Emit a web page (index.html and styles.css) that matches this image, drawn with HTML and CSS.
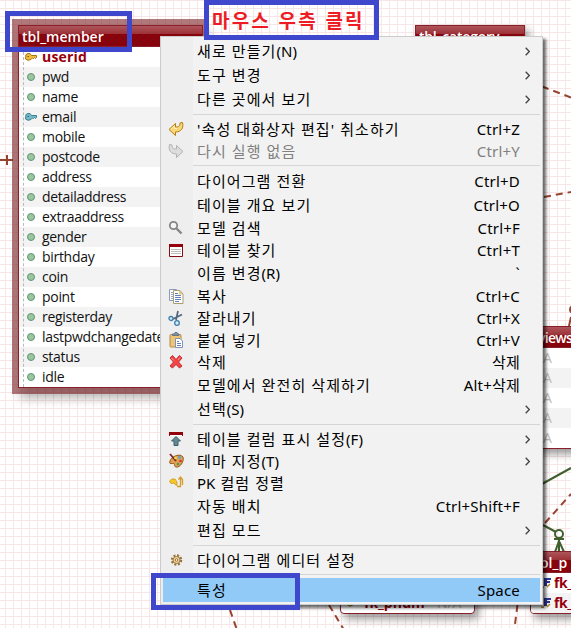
FILE: index.html
```html
<!DOCTYPE html>
<html lang="ko">
<head>
<meta charset="utf-8">
<title>tbl_member</title>
<link rel="stylesheet" href="styles.css">
</head>
<body>
<main class="canvas">
  <svg class="links" width="571" height="628" fill="none" stroke="#96442e" stroke-width="2">
    <path d="M0 160H13M7 155V165"/>
    <path stroke-dasharray="7 5" d="M542 86.5L571 97.5M544 197L571 192M545 523L571 494M230 610L237 630M329 605L344 630M517.500 605L515 624"/>
    <path d="M573 306c-4 1-4 6 0 7M571 317l-2 9"/>
    <g stroke="#40602f"><path d="M542 484L571 468M543 525L556 532M554 539H564M559 539V552M559 541L555 552M559 541L564 552"/><circle cx="559" cy="534" r="4"/></g>
  </svg>

  <section class="table member">
    <h2>tbl_member</h2>
    <ul>
      <li class="pk"><svg class="key" viewBox="0 0 12 8"><path fill="#f0bd3c" stroke="#a67516" d="M1 1.500L3 .5H5L6.500 2.500H11.500V4.500L10.500 5.500L9.500 4.500L8.500 5.500L7.500 5L6 6.500L3 7.300L.5 6Z"/><path stroke="#7a5512" d="M2.500 3.500H4"/></svg>userid</li>
      <li><i></i>pwd</li>
      <li><i></i>name</li>
      <li><svg class="key" viewBox="0 0 12 8"><path fill="#74bac7" stroke="#397f91" d="M1 1.500L3 .5H5L6.500 2.500H11.500V4.500L10.500 5.500L9.500 4.500L8.500 5.500L7.500 5L6 6.500L3 7.300L.5 6Z"/><path stroke="#245d70" d="M2.500 3.500H4"/></svg>email</li>
      <li><i></i>mobile</li>
      <li><i></i>postcode</li>
      <li><i></i>address</li>
      <li><i></i>detailaddress</li>
      <li><i></i>extraaddress</li>
      <li><i></i>gender</li>
      <li><i></i>birthday</li>
      <li><i></i>coin</li>
      <li><i></i>point</li>
      <li><i></i>registerday</li>
      <li><i></i>lastpwdchangedate</li>
      <li><i></i>status</li>
      <li><i></i>idle</li>
    </ul>
  </section>
  <section class="table category"><h2>tbl_category</h2></section>
  <section class="table reviews"><h2>views</h2><ul><li>A</li><li>A</li><li>A</li><li>A</li><li>A</li></ul></section>
  <section class="table product"><h2>ol_p</h2><ul>
    <li><svg class="fk" viewBox="0 0 10 10"><path fill="#303894" d="M3 0H10V2H6V3H9V5H6V8H3Z"/><path stroke="#b58a28" stroke-width="1.500" fill="none" d="M0 9.200H3M6 9L9 6"/></svg>fk_</li>
    <li><svg class="fk" viewBox="0 0 10 10"><path fill="#303894" d="M3 0H10V2H6V3H9V5H6V8H3Z"/><path stroke="#b58a28" stroke-width="1.500" fill="none" d="M0 9.200H3M6 9L9 6"/></svg>fk_</li></ul></section>
  <section class="table order"><ul><li><svg class="key" viewBox="0 0 12 8"><path fill="#f0bd3c" stroke="#a67516" d="M1 1.500L3 .5H5L6.500 2.500H11.500V4.500L7.500 5L3 7.300L.5 6Z"/></svg>fk_pnum<em>N/A</em></li></ul></section>

  <nav class="menu">
    <div class="item sub"><span>새로 만들기<b>(N)</b></span><svg class="chev" viewBox="0 0 5 9"><path d="M.7.7L4.300 4.500L.7 8.300"/></svg></div>
    <div class="item sub"><span>도구 변경</span><svg class="chev" viewBox="0 0 5 9"><path d="M.7.7L4.300 4.500L.7 8.300"/></svg></div>
    <div class="item sub"><span>다른 곳에서 보기</span><svg class="chev" viewBox="0 0 5 9"><path d="M.7.7L4.300 4.500L.7 8.300"/></svg></div>
    <hr>
    <div class="item short"><svg class="icon" viewBox="0 0 16 16"><path fill="#fbd675" stroke="#b37d15" d="M1 8.500L7.500 2.500V6C11 6 12 5 12 2L14.500 1.500C16 7 13 11 7.500 11V14.500Z"/><path stroke="#fff0b8" d="M3 8L6.500 5V7.500H9"/></svg><span>'속성 대화상자 편집' 취소하기</span><kbd>Ctrl+Z</kbd></div>
    <div class="item short off"><svg class="icon" viewBox="0 0 16 16"><path fill="#ddd" stroke="#b2b2b2" d="M15 8.500L8.500 2.500V6C5 6 4 5 4 2L1.500 1.500C0 7 3 11 8.500 11V14.500Z"/></svg><span>다시 실행 없음</span><kbd>Ctrl+Y</kbd></div>
    <hr>
    <div class="item"><span>다이어그램 전환</span><kbd>Ctrl+D</kbd></div>
    <div class="item"><span>테이블 개요 보기</span><kbd>Ctrl+O</kbd></div>
    <div class="item short"><svg class="icon" viewBox="0 0 16 16"><circle cx="5.500" cy="5.500" r="3.700" fill="#f5f5f5" stroke="#858585" stroke-width="1.800"/><path stroke="#858585" stroke-width="2.400" d="M8.500 8.500L13.500 13.500"/></svg><span>모델 검색</span><kbd>Ctrl+F</kbd></div>
    <div class="item short"><svg class="icon" viewBox="0 0 16 16"><path fill="#fff" stroke="#850d13" d="M1.500 2.500H14.500V14.500H1.500Z"/><path fill="#92000a" d="M1 2H15V5H1Z"/><path stroke="#bbb" d="M3 7.500H13M3 9.500H13M3 11.500H13"/></svg><span>테이블 찾기</span><kbd>Ctrl+T</kbd></div>
    <div class="item"><span>이름 변경<b>(R)</b></span><kbd>`</kbd></div>
    <div class="item short"><svg class="icon" viewBox="0 0 16 16"><path fill="#fff" stroke="#8b9ab8" d="M1.500 1.500H8.500V12.500H1.500Z"/><path stroke="#8ea9d5" d="M3 4.500H5M3 6.500H5M3 8.500H5M3 10.500H5"/><path fill="#fff" stroke="#ab9d70" d="M5.500 2.500H12L15 6V15.500H5.500Z"/><path fill="#e3c878" d="M11 2.500V6.500H15Z"/><path stroke="#6281b9" d="M7 5.500H10M7 7.500H13M7 9.500H13M7 11.500H13M7 13.500H11"/></svg><span>복사</span><kbd>Ctrl+C</kbd></div>
    <div class="item short"><svg class="icon" viewBox="0 0 16 16"><path stroke="#52677e" stroke-width="1.700" d="M10 1L8 10M14 4.500L5 9"/><g fill="#d8edfa" stroke="#3c7fab" stroke-width="1.300"><circle cx="3" cy="8.500" r="2"/><circle cx="9" cy="13" r="2.300"/></g></svg><span>잘라내기</span><kbd>Ctrl+X</kbd></div>
    <div class="item short"><svg class="icon" viewBox="0 0 16 16"><rect x="2" y="2.500" width="11" height="12.500" rx="1" fill="#edc579" stroke="#b78a43"/><path fill="#8090a7" stroke="#65748b" d="M4.500 3.500V2H6L7 .5H9L10 2H11V3.500Z"/><path fill="#fff" stroke="#8193b2" d="M7.500 6.500H12L14.500 9V15.500H7.500Z"/><path stroke="#6281b9" d="M9 9.500H11M9 11.500H13M9 13.500H13"/></svg><span>붙여 넣기</span><kbd>Ctrl+V</kbd></div>
    <div class="item short"><svg class="icon" viewBox="0 0 16 16"><path fill="#ee4545" stroke="#c92a34" d="M2 4L4.500 1.500L8 5.500L11.500 1.500L14 4L10.500 8L14 12L11.500 14L8 10.500L4.500 14L2 12L5.500 8Z"/><path stroke="#ff9a91" d="M3.500 4L6 6.500M10 6L12 3.500"/></svg><span>삭제</span><kbd>삭제</kbd></div>
    <div class="item"><span>모델에서 완전히 삭제하기</span><kbd>Alt+삭제</kbd></div>
    <div class="item sub"><span>선택<b>(S)</b></span><svg class="chev" viewBox="0 0 5 9"><path d="M.7.7L4.300 4.500L.7 8.300"/></svg></div>
    <hr>
    <div class="item short sub"><svg class="icon" viewBox="0 0 16 16"><path fill="#92000a" d="M1 1H15V5H1Z"/><path stroke="#fff" d="M2 4.500H14"/><path fill="#658890" stroke="#3b626c" d="M8 5.500L12.500 10H10V14.500H6V10H3.500Z"/></svg><span>테이블 컬럼 표시 설정<b>(F)</b></span><svg class="chev" viewBox="0 0 5 9"><path d="M.7.7L4.300 4.500L.7 8.300"/></svg></div>
    <div class="item short sub"><svg class="icon" viewBox="0 0 16 16"><path fill="#e0a052" stroke="#93571d" d="M2 8C4 3 12 0 15 4C16.500 8 12 15 8 14C5 13 8 10 4.500 10.500C2 11 1 10 2 8Z"/><path stroke="#7d2722" stroke-width="1.800" d="M2 1L8 8"/><circle cx="7.500" cy="5" r="1.300" fill="#eee04c"/><circle cx="11.500" cy="4.500" r="1.400" fill="#54a8d5"/><circle cx="12.500" cy="8" r="1.300" fill="#d5362d"/><circle cx="10" cy="11" r="1.300" fill="#4c9950"/></svg><span>테마 지정<b>(T)</b></span><svg class="chev" viewBox="0 0 5 9"><path d="M.7.7L4.300 4.500L.7 8.300"/></svg></div>
    <div class="item short"><svg class="icon" viewBox="0 0 16 16"><path fill="#f7c925" stroke="#cb961c" stroke-width=".8" d="M1.500 6L4 4H7L9 7V10.500L7 9.500L6 8L3 8.500Z"/><path fill="none" stroke="#d59a23" stroke-width="1.300" d="M9 11.500H12.500V3M10.500 4.500L12.500 2L14.500 4.500V10"/></svg><span><b>PK</b> 컬럼 정렬</span></div>
    <div class="item"><span>자동 배치</span><kbd>Ctrl+Shift+F</kbd></div>
    <div class="item sub"><span>편집 모드</span><svg class="chev" viewBox="0 0 5 9"><path d="M.7.7L4.300 4.500L.7 8.300"/></svg></div>
    <hr>
    <div class="item short"><svg class="icon" viewBox="0 0 16 16"><circle cx="8.500" cy="8" r="4.500" fill="none" stroke="#94733d" stroke-width="2.500" stroke-dasharray="2 1.530"/><circle cx="8.500" cy="8" r="3.500" fill="#f1d49c" stroke="#a17a3c"/><circle cx="8.500" cy="8" r="1.300" fill="#fff" stroke="#94733d"/></svg><span>다이어그램 에디터 설정</span></div>
    <hr>
    <div class="item selected"><span>특성</span><kbd>Space</kbd></div>
  </nav>

  <div class="mark mark-title"></div>
  <div class="mark mark-click">마우스 우측 클릭</div>
  <div class="mark mark-prop"></div>
</main>
</body>
</html>
```
FILE: styles.css
```css
* { box-sizing: border-box; }
body { margin: 0; }
.canvas {
  position: relative;
  width: 571px;
  height: 628px;
  overflow: hidden;
  background-color: #fff;
  background-image:
    linear-gradient(#f8e5e5 1px, transparent 1px),
    linear-gradient(90deg, #f8e5e5 1px, transparent 1px);
  background-size: 8px 8px;
  background-position: 5px 0;
}
.links { position: absolute; left: 0; top: 0; }

/* diagram nodes */
.table {
  position: absolute;
  border: 1px solid #87202a;
  background: #fff;
  box-shadow: 4px 5px 8px rgba(0, 0, 0, .4);
  color: #111;
  font: 14px/20px "Open Sans", "Noto Sans", sans-serif;
  overflow: hidden;
}
.table h2 {
  margin: 0;
  height: 21px;
  padding: 1px 3px 0;
  color: #fff;
  font-size: 14px;
  font-weight: 600;
  line-height: 20px;
  border-bottom: 1px solid #87202a;
  background:
    linear-gradient(rgba(255, 255, 255, .32), rgba(255, 255, 255, .18) 8px, transparent 8px),
    repeating-linear-gradient(135deg, #8e0009 0 3px, #7d0a10 3px 5px);
}
.table ul { margin: 0; padding: 0; list-style: none; }
.table li { display: flex; align-items: center; height: 20px; white-space: nowrap; }
.table li:nth-child(even) { background: #f3f3f3; }
.member { left: 18px; top: 25px; width: 185px; height: 363px; overflow: visible;
  box-shadow: 0 0 0 6px rgba(130, 45, 49, .63), 4px 8px 10px 2px rgba(0, 0, 0, .3); }
.member ul { position: relative; }
.member ul::before { content: ""; position: absolute; left: 4px; top: 0; bottom: 0; border-left: 1px dashed #bbb; }
.member li { padding-left: 8px; gap: 7px; letter-spacing: -.3px; }
.member i { width: 8px; height: 8px; border: 1px solid #609573; border-radius: 50%; background: #9ac6a0; }
.key { width: 12px; height: 8px; margin-left: -2px; fill: none; }
.member li:has(.key) { gap: 5px; }
.member li.pk { letter-spacing: .2px; }
.member li.pk, .product li, .order li { color: #98000d; font-weight: 700; }
.category { left: 415px; top: 25px; width: 110px; height: 60px; }
.category h2 { letter-spacing: -.2px; }
.reviews { left: 520px; top: 326px; width: 80px; height: 123px; }
.reviews h2 { padding-left: 17px; letter-spacing: -.7px; }
.reviews li { padding-left: 22px; color: #bbb; }
.product { left: 530px; top: 551px; width: 70px; height: 63px; border-radius: 0 0 4px 4px; }
.product h2 { padding-left: 9px; }
.product li { padding-left: 10px; gap: 3px; letter-spacing: -.4px; }
.fk { width: 10px; height: 10px; }
.order { left: 340px; top: 592px; width: 135px; height: 22px; border-radius: 0 0 4px 4px; }
.order li { padding-left: 8px; gap: 5px; }
.order em { margin-left: 7px; color: #bbb; font-style: normal; font-weight: 400; }

/* context menu */
.menu {
  position: absolute;
  left: 160px;
  top: 36px;
  width: 383px;
  height: 569px;
  padding: 2px;
  border: 1px solid #ccc;
  background: linear-gradient(90deg, #eee 32px, #f2f2f2 32px);
  box-shadow: 3px 3px 3px rgba(0, 0, 0, .6);
  color: #000;
  font: 15px/22px "Noto Sans", "Noto Sans CJK KR", sans-serif;
}
.item {
  display: grid;
  grid-template-columns: 34px 1fr auto;
  align-items: center;
  height: 24px;
  padding-right: 20px;
  white-space: nowrap;
}
.item span { grid-column: 2; letter-spacing: 1.1px; }
.item b { font-weight: 400; letter-spacing: 0; }
.item.short { height: 22px; }
.item.sub { padding-right: 10px; }
.item.off { color: #808080; }
.item.selected { background: #91c9f7; }
.item kbd { grid-column: 3; font: inherit; letter-spacing: .2px; }
.icon { grid-column: 1; grid-row: 1; width: 16px; height: 16px; margin-left: 5px; fill: none; }
.chev { grid-column: 3; width: 5px; height: 9px; fill: none; stroke: #444; stroke-width: 1.3; }
.menu hr { height: 1px; margin: 3px 0 3px 30px; border: 0; background: #d5d5d5; }

/* annotations */
.mark { position: absolute; border: 5px solid #3f48cc; }
.mark-title { left: 5px; top: 11px; width: 127px; height: 41px; }
.mark-click {
  left: 204px; top: 0; width: 175px; height: 40px;
  padding-left: 3px;
  color: #ed1c24;
  font: 700 19px/29px "Noto Sans CJK KR", sans-serif;
  white-space: nowrap;
  letter-spacing: 2.2px;
}
.mark-prop { left: 151px; top: 573px; width: 149px; height: 37px; }
```
